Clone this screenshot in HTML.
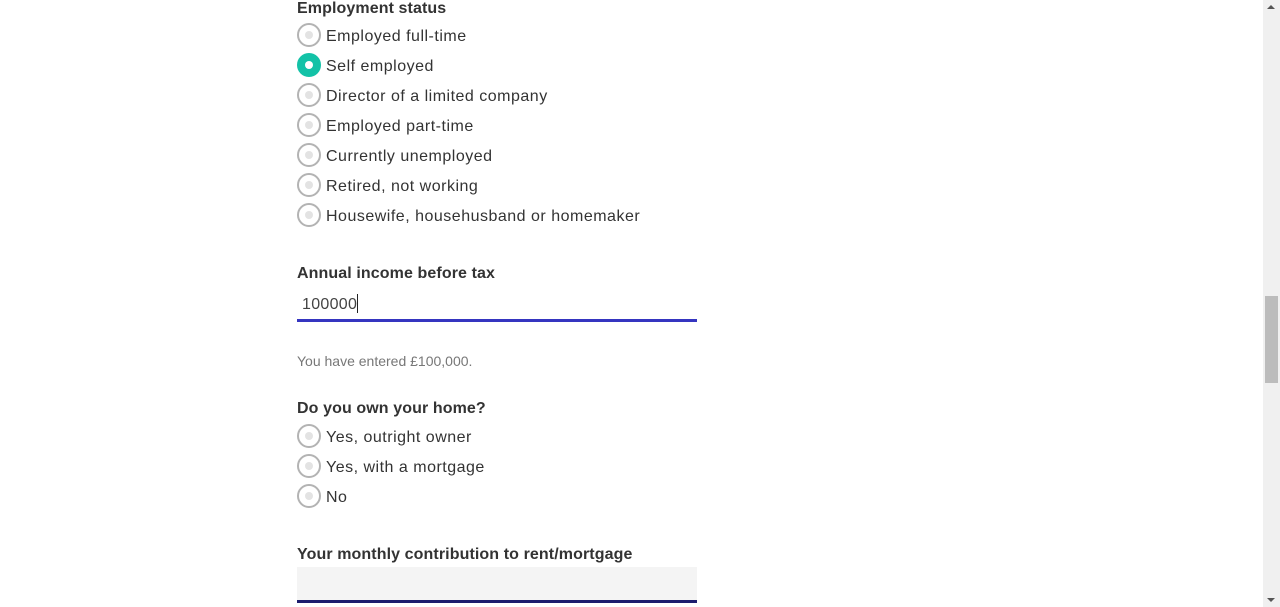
<!DOCTYPE html>
<html><head><style>
body{margin:0;width:1280px;height:607px;overflow:hidden;background:#fff;font-family:"Liberation Sans",sans-serif;color:#333;position:relative}
.a{position:absolute;white-space:nowrap}
.lbl{font-size:16px;font-weight:bold;color:#333;left:297px;letter-spacing:0.1px}
.r{position:absolute;left:297px;width:20px;height:20px;border:2px solid #b3b3b3;border-radius:50%;background:#fff}
.r:after{content:"";position:absolute;left:6px;top:6px;width:8px;height:8px;border-radius:50%;background:#e3e3e3}
.r.on{background:#13c2a7;border-color:#13c2a7}
.r.on:after{background:#fff}
.t{position:absolute;left:326px;font-size:16px;color:#333;letter-spacing:0.5px;white-space:nowrap}
</style></head><body>
<div class="a lbl" style="top:0px">Employment status</div>
<div class="r" style="top:23px"></div><div class="t" style="top:28px">Employed full-time</div>
<div class="r on" style="top:53px"></div><div class="t" style="top:58px">Self employed</div>
<div class="r" style="top:83px"></div><div class="t" style="top:88px">Director of a limited company</div>
<div class="r" style="top:113px"></div><div class="t" style="top:118px">Employed part-time</div>
<div class="r" style="top:143px"></div><div class="t" style="top:148px">Currently unemployed</div>
<div class="r" style="top:173px"></div><div class="t" style="top:178px">Retired, not working</div>
<div class="r" style="top:203px"></div><div class="t" style="top:208px">Housewife, househusband or homemaker</div>
<div class="a lbl" style="top:265px">Annual income before tax</div>
<div class="a" style="left:302px;top:294px;font-size:16px;color:#444;letter-spacing:0.3px">100000<span style="display:inline-block;width:1px;height:19px;background:#222;vertical-align:-4px"></span></div>
<div class="a" style="left:297px;top:319px;width:400px;height:3px;background:#3535c0"></div>
<div class="a" style="left:297px;top:353px;font-size:14px;color:#777">You have entered £100,000.</div>
<div class="a lbl" style="top:400px">Do you own your home?</div>
<div class="r" style="top:424px"></div><div class="t" style="top:429px">Yes, outright owner</div>
<div class="r" style="top:454px"></div><div class="t" style="top:459px">Yes, with a mortgage</div>
<div class="r" style="top:484px"></div><div class="t" style="top:489px">No</div>
<div class="a lbl" style="top:546px">Your monthly contribution to rent/mortgage</div>
<div class="a" style="left:297px;top:567px;width:400px;height:33px;background:#f4f4f4;border-bottom:3px solid #1d1d6e"></div>
<div class="a" style="left:1263px;top:0;width:17px;height:607px;background:#f0f0f0"></div>
<div class="a" style="left:1265px;top:296px;width:13px;height:87px;background:#bcbcbc"></div>
<div class="a" style="left:1267px;top:5px;width:0;height:0;border-left:4px solid transparent;border-right:4px solid transparent;border-bottom:4px solid #555"></div>
<div class="a" style="left:1267px;top:598px;width:0;height:0;border-left:4px solid transparent;border-right:4px solid transparent;border-top:4px solid #555"></div>
</body></html>
